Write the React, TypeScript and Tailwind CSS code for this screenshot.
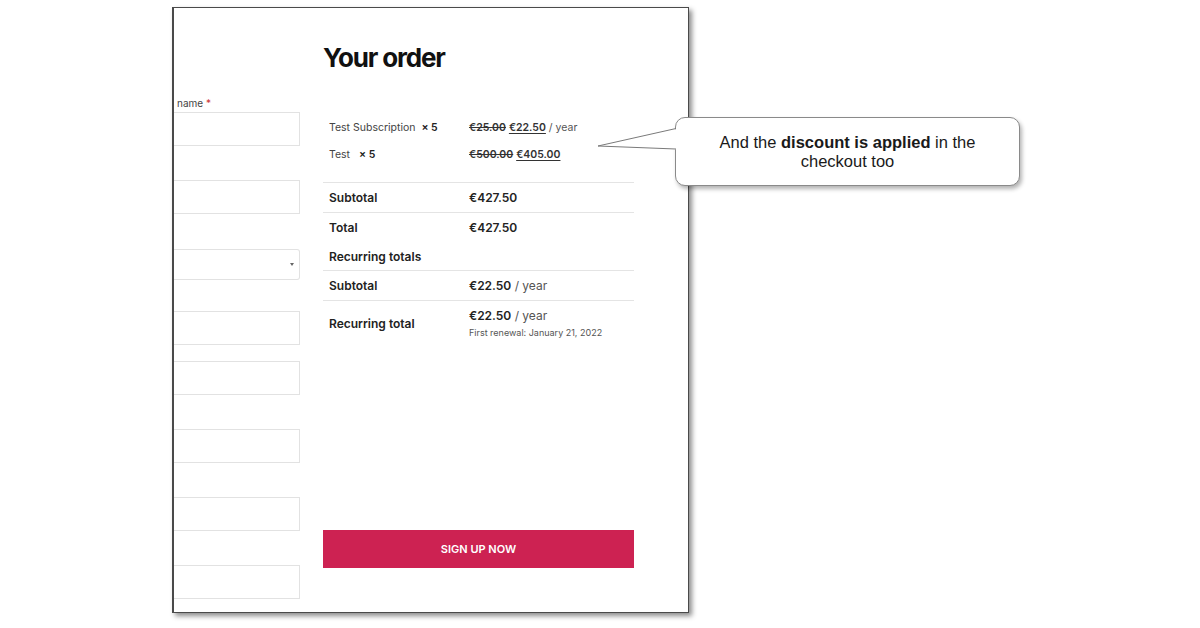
import React from 'react';

const inputGaps = [0, 34, 35, 31, 16, 34, 34, 34];

function FakeInput({ select, top }: { select?: boolean; top: number }) {
  return (
    <div
      style={{ marginTop: top }}
      className={`relative border border-l-0 border-[#e2e2e2] bg-white ${
        select ? 'h-[31px] rounded-r-[3px] border-[#d4d4d4]' : 'h-[34px]'
      }`}
    >
      {select && (
        <span className="absolute right-[5px] top-[13px] h-0 w-0 border-x-[2.5px] border-t-[3px] border-x-transparent border-t-[#666]" />
      )}
    </div>
  );
}

function Price({ old, now, year }: { old: string; now: string; year?: boolean }) {
  return (
    <span className="text-[10.5px] text-[#333]">
      <span className="font-semibold line-through">{old}</span>{' '}
      <span className="font-semibold underline underline-offset-2">{now}</span>
      {year && <span className="text-[#555]"> / year</span>}
    </span>
  );
}

export default function App() {
  return (
    <div className="relative h-[628px] w-[1200px] overflow-hidden bg-white font-['Inter',sans-serif]">
      {/* screenshot frame */}
      <div className="ml-[172px] mt-[7px] flex h-[606px] w-[517px] border border-l-2 border-[#4a4a4a] bg-white shadow-[3px_3px_5px_rgba(0,0,0,0.45)]">
        {/* billing form, cut off */}
        <div className="w-[126px] pt-[86px]">
          <div className="h-[18px] pl-[3px] text-[10px] leading-[18px] text-[#444]">
            name <span className="text-[#c33]">*</span>
          </div>
          {inputGaps.map((g, i) => (
            <FakeInput key={i} top={g} select={i === 2} />
          ))}
        </div>

        {/* order summary */}
        <div className="ml-[23px] w-[311px]">
          <h2 className="mt-[37px] text-[26px] font-bold leading-[26px] tracking-[-0.045em] text-[#111]">
            Your order
          </h2>

          <div className="mt-[43px] pb-[14px]">
            <div className="flex h-[27px] items-center">
              <div className="w-[146px] pl-[6px] text-[10.5px] text-[#444]">
                Test Subscription&nbsp;&nbsp;<b className="font-semibold text-[#222]">× 5</b>
              </div>
              <Price old="€25.00" now="€22.50" year />
            </div>
            <div className="flex h-[27px] items-center">
              <div className="w-[146px] pl-[6px] text-[10.5px] text-[#444]">
                Test&nbsp;&nbsp;&nbsp;<b className="font-semibold text-[#222]">× 5</b>
              </div>
              <Price old="€500.00" now="€405.00" />
            </div>
          </div>

          <div className="border-t border-[#e4e4e4] text-[12px] text-[#222]">
            <div className="flex h-[30px] items-center border-b border-[#e4e4e4]">
              <div className="w-[146px] pl-[6px] font-semibold">Subtotal</div>
              <div className="font-semibold">€427.50</div>
            </div>
            <div className="flex h-[30px] items-center">
              <div className="w-[146px] pl-[6px] font-semibold">Total</div>
              <div className="font-semibold">€427.50</div>
            </div>
            <div className="flex h-[28px] items-center border-b border-[#e4e4e4]">
              <div className="pl-[6px] font-semibold">Recurring totals</div>
            </div>
            <div className="flex h-[30px] items-center border-b border-[#e4e4e4]">
              <div className="w-[146px] pl-[6px] font-semibold">Subtotal</div>
              <div>
                <span className="font-semibold">€22.50</span>
                <span className="text-[#555]"> / year</span>
              </div>
            </div>
            <div className="flex h-[45px] items-center">
              <div className="w-[146px] pl-[6px] font-semibold">Recurring total</div>
              <div>
                <div className="leading-[16px]">
                  <span className="font-semibold">€22.50</span>
                  <span className="text-[#555]"> / year</span>
                </div>
                <div className="mt-[2px] text-[9px] leading-[14px] text-[#555]">
                  First renewal: January 21, 2022
                </div>
              </div>
            </div>
          </div>

          <button className="mt-[184px] flex h-[38px] w-full items-center justify-center bg-[#cd2252] text-[11px] font-semibold uppercase text-white">
            Sign up now
          </button>
        </div>
      </div>

      {/* callout */}
      <div className="absolute left-[675px] top-[117px] flex h-[69px] w-[345px] items-center justify-center rounded-[10px] border border-[#8a8a8a] bg-white text-center font-['Liberation_Sans',Arial,sans-serif] text-[16.5px] leading-[19px] text-[#1a1a1a] shadow-[2px_3px_4px_rgba(0,0,0,0.3)]">
        <p className="w-[310px]">
          And the <b>discount is applied</b> in the checkout too
        </p>
      </div>
      <svg className="absolute left-0 top-0" width="1200" height="628" viewBox="0 0 1200 628">
        <polygon points="679,128.5 598,146 679,149.5" fill="#fff" />
        <polyline points="676,128.5 598,146 676,149" fill="none" stroke="#7a7a7a" strokeWidth="1" />
      </svg>
    </div>
  );
}
